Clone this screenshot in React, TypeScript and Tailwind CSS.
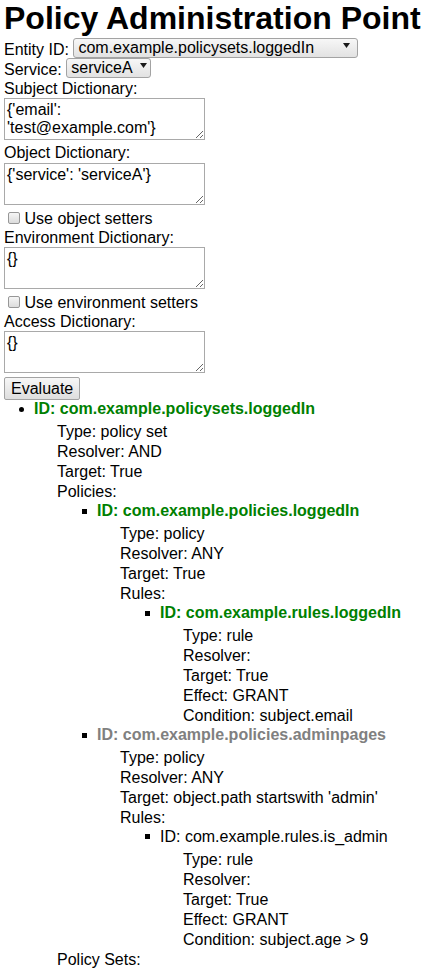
import React from "react";

type PapNode = {
  id: string;
  type: string;
  tone: "green" | "gray" | "plain";
  resolver: string;
  target: string;
  effect?: string;
  condition?: string;
  childLabel?: string;
  children?: PapNode[];
};

// Sample tree as returned by the evaluate call
const tree: PapNode = {
  id: "com.example.policysets.loggedIn",
  type: "policy set",
  tone: "green",
  resolver: "AND",
  target: "True",
  childLabel: "Policies:",
  children: [
    {
      id: "com.example.policies.loggedIn",
      type: "policy",
      tone: "green",
      resolver: "ANY",
      target: "True",
      childLabel: "Rules:",
      children: [
        {
          id: "com.example.rules.loggedIn",
          type: "rule",
          tone: "green",
          resolver: "",
          target: "True",
          effect: "GRANT",
          condition: "subject.email",
        },
      ],
    },
    {
      id: "com.example.policies.adminpages",
      type: "policy",
      tone: "gray",
      resolver: "ANY",
      target: "object.path startswith 'admin'",
      childLabel: "Rules:",
      children: [
        {
          id: "com.example.rules.is_admin",
          type: "rule",
          tone: "plain",
          resolver: "",
          target: "True",
          effect: "GRANT",
          condition: "subject.age > 9",
        },
      ],
    },
  ],
};

const toneClass = {
  green: "font-bold text-[#008000]",
  gray: "font-bold text-[#808080]",
  plain: "font-normal text-black",
};

const Arrow = ({ className }: { className: string }) => (
  <svg
    width="7"
    height="5"
    viewBox="0 0 7 5"
    className={`pointer-events-none absolute top-[7px] ${className}`}
  >
    <polygon points="0,0 7,0 3.5,5" fill="#1a1a1a" />
  </svg>
);

const Checkbox = ({ label }: { label: string }) => (
  <label className="flex h-[19.8px] items-start">
    <input
      type="checkbox"
      className="ml-[3.5px] mt-[3.2px] h-[12px] w-[12px] appearance-none rounded-[2px] border border-[#979797] bg-linear-to-b from-[#f6f6f6] to-[#dcdcdc]"
    />
    <span className="ml-[5px] leading-[20px]">{label}</span>
  </label>
);

const Field = ({ label, value }: { label: string; value: string }) => (
  <>
    <div className="h-[18.4px] leading-[18.4px]">{label}</div>
    <textarea
      defaultValue={value}
      className="mb-1 block h-[42px] w-[201px] border border-[#a9a9a9] px-[2px] py-[2px] leading-[18px] text-black"
    />
  </>
);

const TreeItem = ({ node, depth }: { node: PapNode; depth: number }) => (
  <li>
    <div className="-ml-4 flex h-[18.4px] items-center leading-[18.4px]">
      <span className="flex w-4">
        {depth === 0 ? (
          <span className="ml-px h-[5px] w-[5px] rounded-full bg-black" />
        ) : (
          <span className="ml-px h-[5px] w-[5px] bg-black" />
        )}
      </span>
      <span className={toneClass[node.tone]}>ID: {node.id}</span>
    </div>
    <div className="ml-[23px] mt-[3.5px] leading-5">
      <div>Type: {node.type}</div>
      <div>Resolver: {node.resolver}</div>
      <div>Target: {node.target}</div>
      {node.effect && <div>Effect: {node.effect}</div>}
      {node.condition && <div>Condition: {node.condition}</div>}
      {node.childLabel && (
        <>
          <div>{node.childLabel}</div>
          <ul className="pl-10">
            {node.children?.map((child) => (
              <TreeItem key={child.id} node={child} depth={depth + 1} />
            ))}
          </ul>
        </>
      )}
      {depth === 0 && <div>Policy Sets:</div>}
    </div>
  </li>
);

export default function App() {
  return (
    <div className="min-h-[977px] bg-white px-1 font-['Liberation_Sans',Arial,sans-serif] text-[16px] text-black">
      <h1 className="h-[37px] text-[32px] font-bold leading-[37px]">
        Policy Administration Point
      </h1>

      <div className="flex h-[23px] items-end">
        <span className="leading-5">Entity ID:</span>
        <div className="relative ml-[4.5px]">
          <select className="h-5 w-[285px] appearance-none rounded-[3px] border border-[#a3a3a3] bg-linear-to-b from-[#f7f7f7] to-[#e2e2e2] pl-1 pr-5 leading-[18px]">
            <option>com.example.policysets.loggedIn</option>
          </select>
          <Arrow className="right-[8px]" />
        </div>
      </div>

      <div className="flex h-5 items-end">
        <span className="leading-5">Service:</span>
        <div className="relative ml-[4.5px]">
          <select className="h-5 w-[85px] appearance-none rounded-[3px] border border-[#a3a3a3] bg-linear-to-b from-[#f7f7f7] to-[#e2e2e2] pl-1 pr-3 leading-[18px]">
            <option>serviceA</option>
          </select>
          <Arrow className="right-[4px]" />
        </div>
      </div>

      <Field label="Subject Dictionary:" value="{'email': 'test@example.com'}" />
      <Field label="Object Dictionary:" value="{'service': 'serviceA'}" />
      <Checkbox label="Use object setters" />
      <Field label="Environment Dictionary:" value="{}" />
      <Checkbox label="Use environment setters" />
      <Field label="Access Dictionary:" value="{}" />

      <button className="block h-[23px] rounded-[2px] border border-[#a3a3a3] bg-linear-to-b from-[#f7f7f7] to-[#dedede] px-[6px] leading-[20px]">
        Evaluate
      </button>

      <ul className="pl-[30px]">
        <TreeItem node={tree} depth={0} />
      </ul>
    </div>
  );
}
